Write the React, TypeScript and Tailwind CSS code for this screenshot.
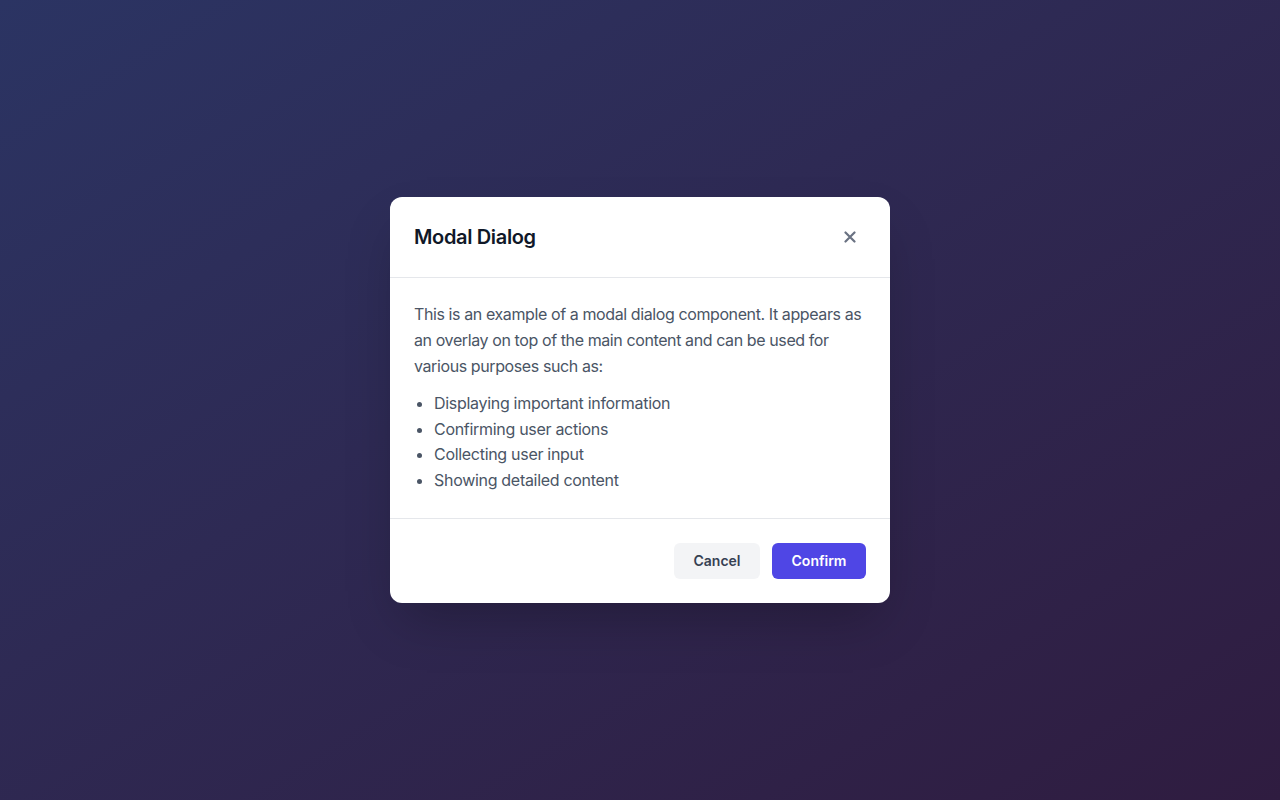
import React from "react";

export default function App() {
  return (
    <div
      className="w-full h-screen flex items-center justify-center bg-gradient-to-br from-[#2b3463] to-[#2f1c40]"
      style={{ fontFamily: "Inter, 'Noto Sans', sans-serif" }}
    >
      <div className="w-[500px] bg-white rounded-xl shadow-2xl">
        <div className="flex items-center justify-between px-6 py-6 border-b border-gray-200">
          <h2 className="text-xl font-semibold text-gray-900 leading-7 tracking-[-0.35px]">Modal Dialog</h2>
          <button className="w-8 h-8 flex items-center justify-center text-gray-500 rounded-md">
            <svg width="12" height="12" viewBox="0 0 12 12" fill="none">
              <path d="M1.5 1.5L10.5 10.5M10.5 1.5L1.5 10.5" stroke="currentColor" strokeWidth="2.2" strokeLinecap="round" />
            </svg>
          </button>
        </div>
        <div className="p-6 text-base leading-[1.6] text-gray-600 tracking-[-0.3px]">
          <p className="tracking-[-0.4px]">
            This is an example of a modal dialog component. It appears as an overlay on top of the main content and can be used for various purposes such as:
          </p>
          <ul className="list-disc pl-5 mt-3">
            <li>Displaying important information</li>
            <li>Confirming user actions</li>
            <li>Collecting user input</li>
            <li>Showing detailed content</li>
          </ul>
        </div>
        <div className="flex justify-end gap-3 px-6 py-6 border-t border-gray-200">
          <button className="w-[86px] py-2 text-sm leading-5 font-semibold text-gray-700 bg-gray-100 rounded-md">Cancel</button>
          <button className="w-[94px] py-2 text-sm leading-5 font-semibold text-white bg-[#4f46e5] rounded-md">Confirm</button>
        </div>
      </div>
    </div>
  );
}
